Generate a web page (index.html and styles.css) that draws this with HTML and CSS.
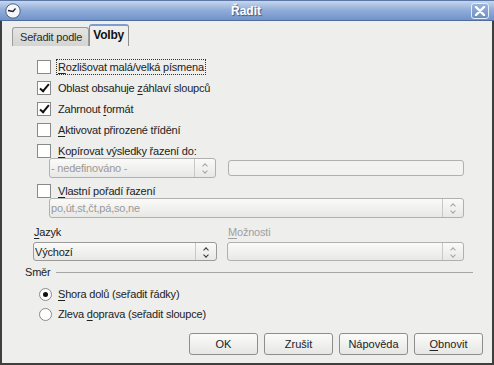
FILE: index.html
```html
<!DOCTYPE html>
<html lang="cs">
<head>
    <meta charset="UTF-8">
    <title>Řadit</title>
    <link rel="stylesheet" href="styles.css">
</head>
<body>
    <div class="window">
        <div class="titlebar">
            <span class="app-icon">
                <svg width="16" height="16" viewBox="0 0 16 16">
                    <circle cx="8" cy="8" r="7.2" fill="#f4f6fa" stroke="#4d6384" stroke-width="1"/>
                    <path d="M3 7.5 L8 8.5 L10.5 5.5" stroke="#222" stroke-width="1.3" fill="none"/>
                </svg>
            </span>
            <span class="title">Řadit</span>
            <span class="close-btn">
                <svg width="12" height="10" viewBox="0 0 12 10">
                    <path d="M2 1 L10 9 M10 1 L2 9" stroke="#fff" stroke-width="2.4" stroke-linecap="round"/>
                </svg>
            </span>
        </div>

        <div class="tabs">
            <div class="tab">Seřadit podle</div>
            <div class="tab active">Volby</div>
        </div>

        <div class="panel">
            <div class="check-row"><span class="box"></span><span class="focused"><u>R</u>ozlišovat malá/velká písmena</span></div>
            <div class="check-row"><span class="box checked"></span><span>Oblast obsahuje <u>z</u>áhlaví sloupců</span></div>
            <div class="check-row"><span class="box checked"></span><span>Zahrnout <u>f</u>ormát</span></div>
            <div class="check-row"><span class="box"></span><span><u>A</u>ktivovat přirozené třídění</span></div>
            <div class="check-row"><span class="box"></span><span><u>K</u>opírovat výsledky řazení do:</span></div>
            <div class="sub-row first">
                <div class="combo disabled narrow"><span class="combo-text">- nedefinováno -</span><span class="spin"></span></div>
                <div class="field disabled wide"></div>
            </div>
            <div class="check-row custom"><span class="box"></span><span><u>V</u>lastní pořadí řazení</span></div>
            <div class="sub-row second">
                <div class="combo disabled full"><span class="combo-text">po,út,st,čt,pá,so,ne</span><span class="spin"></span></div>
            </div>

            <div class="lang-row">
                <div class="lang-col">
                    <div class="label"><u>J</u>azyk</div>
                    <div class="combo"><span class="combo-text">Výchozí</span><span class="spin"></span></div>
                </div>
                <div class="lang-col right">
                    <div class="label disabled-text"><u>M</u>ožnosti</div>
                    <div class="combo disabled"><span class="combo-text"></span><span class="spin"></span></div>
                </div>
            </div>

            <div class="group-head"><span>Směr</span><span class="line"></span></div>
            <div class="radio-row top"><span class="radio on"></span><span><u>S</u>hora dolů (seřadit řádky)</span></div>
            <div class="radio-row"><span class="radio"></span><span>Zleva <u>d</u>oprava (seřadit sloupce)</span></div>
        </div>

        <div class="buttons">
            <button>OK</button>
            <button>Zrušit</button>
            <button>Nápověda</button>
            <button><u>O</u>bnovit</button>
        </div>
    </div>
</body>
</html>
```

FILE: styles.css
```css
html, body {
    margin: 0;
    padding: 0;
}
body {
    font-family: "Liberation Sans", Arial, sans-serif;
    font-size: 11px;
    letter-spacing: -0.2px;
    color: #222;
    background: #3d3d3d;
}
u {
    text-decoration: underline;
    text-underline-offset: 2px;
}
.window {
    width: 490px;
    height: 363px;
    background: #eeeeec;
    border: 2px solid #3f3f3f;
    border-top: none;
    display: flex;
    flex-direction: column;
}
.titlebar {
    margin: 0 -2px;
    background: linear-gradient(#c6d6ee, #93afda 45%, #7193c9);
    border-top: 1px solid #5a77a6;
    border-bottom: 1px solid #4f6c9c;
    box-sizing: border-box;
    height: 21px;
    display: flex;
    align-items: center;
    padding: 0 5px 0 5px;
}
.app-icon {
    width: 16px;
    height: 16px;
}
.title {
    flex: 1;
    text-align: center;
    color: #fff;
    font-weight: bold;
    font-size: 12px;
    letter-spacing: 0;
    text-shadow: 1px 1px 1px #3a5580;
}
.close-btn {
    width: 16px;
    height: 14px;
    border: 1px solid #e4ecf7;
    border-radius: 3px;
    background: linear-gradient(#9ab4dc, #6e8fc4);
    display: flex;
    align-items: center;
    justify-content: center;
}
.tabs {
    display: flex;
    align-items: flex-end;
    height: 25px;
    padding-left: 10px;
}
.tab {
    height: 18px;
    padding: 0 6px 0 7px;
    line-height: 19px;
    background: linear-gradient(#e4e4e2, #d4d4d2);
    border: 1px solid #9c9c9a;
    border-bottom: none;
    border-radius: 3px 3px 0 0;
    color: #2a2a2a;
}
.tab.active {
    height: 20px;
    line-height: 19px;
    padding: 0 4px 0 3px;
    background: #eeeeec;
    border-color: #8e8e8c;
    border-top: 2px solid #7d9dd0;
    font-weight: bold;
    font-size: 12px;
    color: #111;
}
.panel {
    flex: 1;
    padding: 10px 28px 0 35px;
    display: flex;
    flex-direction: column;
}
.check-row, .radio-row {
    display: flex;
    align-items: center;
    gap: 7px;
    height: 21px;
}
.check-row.custom {
    margin-top: 2px;
}
.focused {
    outline: 1px dotted #333;
    outline-offset: 1px;
}
.box {
    width: 12px;
    height: 12px;
    background: #fff;
    border: 1px solid #8a8a88;
    position: relative;
}
.box.checked::after {
    content: "";
    position: absolute;
    left: 4px;
    top: 0px;
    width: 3px;
    height: 8px;
    border: solid #111;
    border-width: 0 2px 2px 0;
    transform: rotate(40deg);
}
.sub-row {
    display: flex;
    gap: 12px;
    margin-left: 12px;
    align-items: center;
}
.sub-row.first {
    margin-top: -3px;
}
.sub-row.second {
    margin-top: -3px;
}
.combo, .field {
    height: 20px;
    border: 1px solid #9a9a98;
    border-radius: 3px;
    background: linear-gradient(#fafaf9, #e8e8e6);
    display: flex;
    align-items: center;
    box-sizing: border-box;
}
.field {
    height: 16px;
    background: #f2f2f0;
}
.combo.narrow { width: 167px; }
.field.wide { width: 236px; }
.combo.full { width: 415px; }
.combo-text {
    flex: 1;
    padding-left: 1px;
    white-space: nowrap;
}
.combo.disabled .combo-text { color: #9a9a98; }
.combo.disabled, .field.disabled {
    border-color: #b0b0ae;
}
.spin {
    width: 21px;
    height: 100%;
    border-left: 1px solid #c8c8c6;
    box-sizing: border-box;
    position: relative;
}
.spin::before, .spin::after {
    content: "";
    position: absolute;
    left: 8px;
    width: 3px;
    height: 3px;
    border: solid #333;
    border-width: 1px 0 0 1px;
}
.spin::before { top: 5px; transform: rotate(45deg); }
.spin::after { top: 10px; transform: rotate(225deg); }
.combo.disabled .spin::before, .combo.disabled .spin::after {
    border-color: #a4a4a2;
}
.lang-row {
    display: flex;
    gap: 10px;
    margin: 7px 0 0 -4px;
}
.lang-col {
    display: flex;
    flex-direction: column;
    gap: 3px;
    width: 184px;
}
.lang-col.right {
    width: 237px;
}
.lang-col .combo {
    height: 19px;
}
.label {
    height: 14px;
    line-height: 14px;
    padding-left: 1px;
}
.disabled-text {
    color: #a0a09e;
}
.group-head {
    display: flex;
    align-items: center;
    gap: 6px;
    margin: 4px -9px 0 -12px;
    height: 14px;
}
.group-head .line {
    flex: 1;
    border-top: 1px solid #a6a6a4;
}
.radio-row {
    height: 20px;
    padding-left: 2px;
    gap: 6px;
}
.radio-row.top {
    margin-top: 5px;
}
.radio {
    width: 11px;
    height: 11px;
    border: 1px solid #8a8a88;
    border-radius: 50%;
    background: #fff;
    position: relative;
}
.radio.on::after {
    content: "";
    position: absolute;
    left: 3px;
    top: 3px;
    width: 5px;
    height: 5px;
    border-radius: 50%;
    background: #111;
}
.buttons {
    display: flex;
    justify-content: flex-end;
    gap: 6px;
    padding: 0 9px 8px 0;
}
button {
    font-family: "Liberation Sans", Arial, sans-serif;
    font-size: 11px;
    color: #222;
    width: 69px;
    height: 22px;
    border: 1px solid #8e8e8c;
    border-radius: 3px;
    background: linear-gradient(#fbfbfa, #e6e6e4);
    padding: 0;
}
```
